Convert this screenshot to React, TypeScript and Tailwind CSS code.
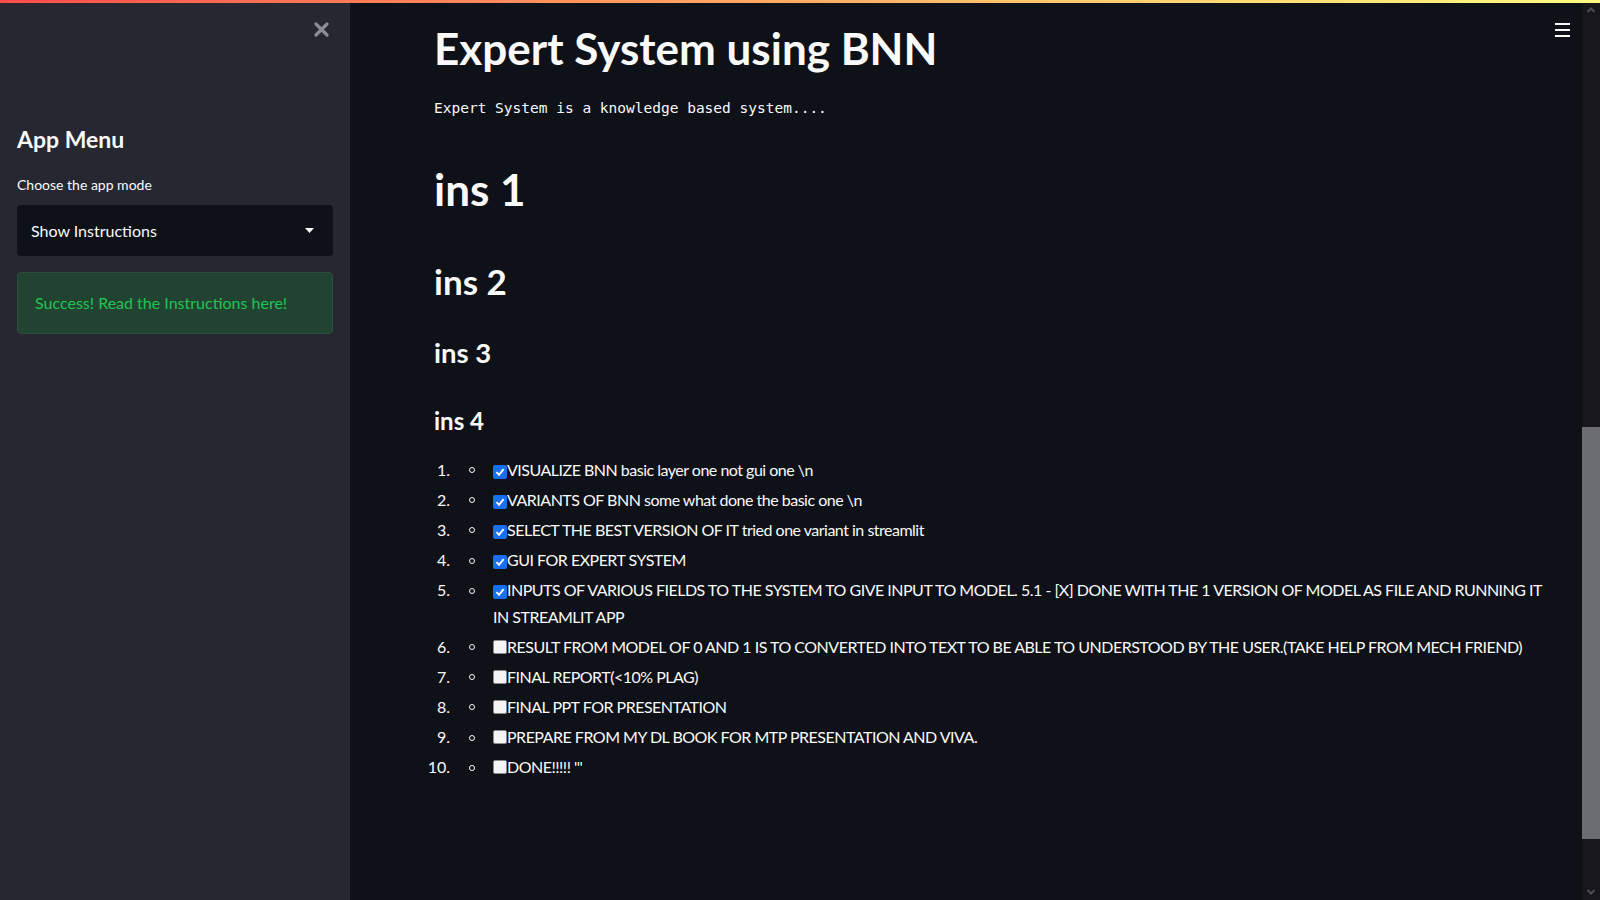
import React from "react"

const items: { done: boolean; text: string }[] = [
  { done: true, text: "VISUALIZE BNN basic layer one not gui one \\n" },
  { done: true, text: "VARIANTS OF BNN some what done the basic one \\n" },
  { done: true, text: "SELECT THE BEST VERSION OF IT tried one variant in streamlit" },
  { done: true, text: "GUI FOR EXPERT SYSTEM" },
  {
    done: true,
    text: "INPUTS OF VARIOUS FIELDS TO THE SYSTEM TO GIVE INPUT TO MODEL. 5.1 - [X] DONE WITH THE 1 VERSION OF MODEL AS FILE AND RUNNING IT IN STREAMLIT APP",
  },
  {
    done: false,
    text: "RESULT FROM MODEL OF 0 AND 1 IS TO CONVERTED INTO TEXT TO BE ABLE TO UNDERSTOOD BY THE USER.(TAKE HELP FROM MECH FRIEND)",
  },
  { done: false, text: "FINAL REPORT(<10% PLAG)" },
  { done: false, text: "FINAL PPT FOR PRESENTATION" },
  { done: false, text: "PREPARE FROM MY DL BOOK FOR MTP PRESENTATION AND VIVA." },
  { done: false, text: "DONE!!!!! '''" },
]

function Check({ done }: { done: boolean }) {
  if (done) {
    return (
      <span className="inline-flex w-[14px] h-[14px] rounded-[2px] bg-[#1a6ff0] items-center justify-center align-[-1px]">
        <svg width="10" height="10" viewBox="0 0 10 10">
          <path d="M1.5 5.2 L4 7.8 L8.6 2.2" fill="none" stroke="#fff" strokeWidth="1.9" />
        </svg>
      </span>
    )
  }
  return (
    <span className="inline-block w-[14px] h-[14px] rounded-[2px] bg-[#f4f4f4] border border-[#8a8a8a] align-[-1px]" />
  )
}

function Sidebar() {
  return (
    <aside className="w-[350px] shrink-0 bg-[#262730] px-[17px] flex flex-col">
      <div className="flex justify-end pt-[19px] pr-[4px]">
        <svg width="15" height="15" viewBox="0 0 15 15">
          <path d="M2 2 L13 13 M13 2 L2 13" stroke="#8b8c96" strokeWidth="3.2" strokeLinecap="round" />
        </svg>
      </div>
      <h2 className="mt-[86px] text-[23px] leading-[32px] font-bold text-[#fafafa]">App Menu</h2>
      <label className="mt-[20px] text-[14px] leading-[20px] text-[#fafafa]">Choose the app mode</label>
      <div className="mt-[10px] h-[51px] rounded-[4px] bg-[#0e1117] flex items-center justify-between pl-[14px] pr-[19px]">
        <span className="text-[16px] text-[#fafafa]">Show Instructions</span>
        <svg width="9" height="5" viewBox="0 0 9 5">
          <path d="M0 0 H9 L4.5 5 Z" fill="#fafafa" />
        </svg>
      </div>
      <div className="mt-[16px] h-[62px] rounded-[4px] bg-[#224332] border border-[#2b5039] flex items-center px-[17px]">
        <span className="text-[16px] text-[#21c354]">Success! Read the Instructions here!</span>
      </div>
    </aside>
  )
}

function Main() {
  return (
    <main className="relative flex-1 bg-[#0e1117] pl-[84px] pr-[40px]">
      <button className="absolute right-[12px] top-[20px] flex flex-col gap-[4px] p-0">
        <span className="block w-[15px] h-[2px] bg-[#fafafa]" />
        <span className="block w-[15px] h-[2px] bg-[#fafafa]" />
        <span className="block w-[15px] h-[2px] bg-[#fafafa]" />
      </button>
      <h1 className="mt-[17px] text-[44px] leading-[56px] font-bold text-[#fafafa]">Expert System using BNN</h1>
      <p className="mt-[22px] font-['DejaVu_Sans_Mono',monospace] text-[14.5px] leading-[20px] text-[#fafafa]">
        Expert System is a knowledge based system....
      </p>
      <h1 className="mt-[43px] text-[44px] leading-[56px] font-bold text-[#fafafa]">ins 1</h1>
      <h2 className="mt-[42px] text-[35px] leading-[44px] font-bold text-[#fafafa]">ins 2</h2>
      <h3 className="mt-[32px] text-[27.5px] leading-[36px] font-bold text-[#fafafa]">ins 3</h3>
      <h4 className="mt-[34px] text-[24px] leading-[32px] font-bold text-[#fafafa]">ins 4</h4>
      <ol className="mt-[20px] list-none">
        {items.map((it, i) => (
          <li key={i} className="flex mb-[3.6px] text-[16px] leading-[26.5px] text-[#fafafa]">
            <span className="w-[16px] shrink-0 flex justify-end whitespace-nowrap">{i + 1}.</span>
            <span className="w-[43px] shrink-0 flex items-center justify-center h-[26.5px]">
              <span className="block w-[6px] h-[6px] rounded-full border border-[#fafafa]" />
            </span>
            <div className="flex-1 tracking-[-0.5px]">
              <Check done={it.done} />
              {it.text}
            </div>
          </li>
        ))}
      </ol>
    </main>
  )
}

function Scrollbar() {
  return (
    <div className="w-[18px] shrink-0 bg-[#17171b] flex flex-col items-center justify-between">
      <svg width="10" height="10" viewBox="0 0 10 10" className="mt-[2px]">
        <path d="M1.5 7 L5 3.5 L8.5 7" fill="none" stroke="#4c4d52" strokeWidth="2" />
      </svg>
      <div className="flex-1 w-full flex flex-col">
        <div className="h-[412px]" />
        <div className="h-[412px] w-full bg-[#6c6d71]" />
      </div>
      <svg width="10" height="10" viewBox="0 0 10 10" className="mb-[3px]">
        <path d="M1.5 3 L5 6.5 L8.5 3" fill="none" stroke="#4c4d52" strokeWidth="2" />
      </svg>
    </div>
  )
}

export default function App() {
  return (
    <div className="w-[1600px] h-[900px] overflow-hidden flex flex-col bg-[#0e1117] font-['Lato','Noto_Sans',sans-serif]">
      <div className="h-[3px] shrink-0 bg-gradient-to-r from-[#ff4b4b] to-[#fffd80]" />
      <div className="flex flex-1 min-h-0">
        <Sidebar />
        <Main />
        <Scrollbar />
      </div>
    </div>
  )
}
